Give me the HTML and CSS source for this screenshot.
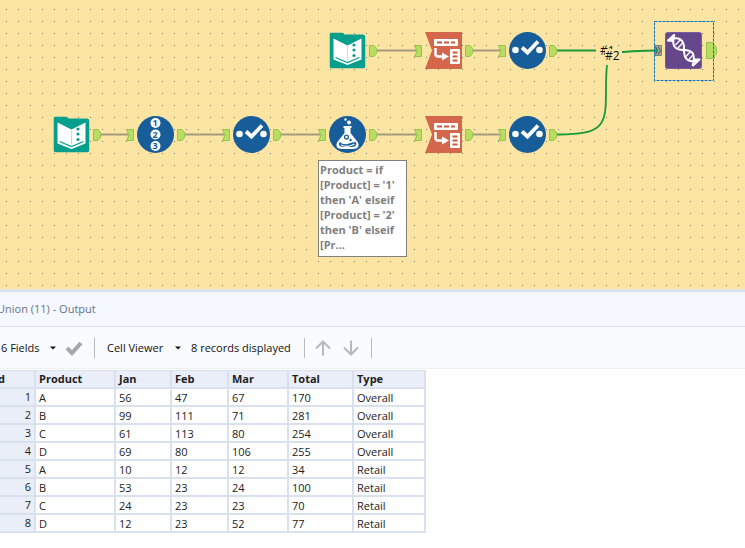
FILE: index.html
```html
<!DOCTYPE html>
<html lang="en">
<head>
<meta charset="utf-8">
<title>Workflow</title>
<link rel="stylesheet" href="styles.css">
</head>
<body>
<main class="app">
  <section class="canvas" aria-label="Workflow canvas">
    <svg class="flow" width="745" height="289" viewBox="0 0 745 289">
      <defs>
        <symbol id="out" viewBox="0 0 8 12" overflow="visible">
          <path d="M.5 .5H5L7.8 4V8L5 11.5H.5Z" fill="#b9dd62" stroke="#94c44c"/>
        </symbol>
        <symbol id="in" viewBox="0 0 8 12" overflow="visible">
          <path d="M.5 .5H7.5V11.5H.5L3 6Z" fill="#b9dd62" stroke="#94c44c"/>
        </symbol>
        <symbol id="book" viewBox="0 0 36 36">
          <path d="M2 0H12Q14 0 15 2H33Q36 2 36 5V33Q36 36 33 36H3Q0 36 0 33V2Q0 0 2 0Z" fill="#069e8c"/>
          <path d="M4 6L18 13L32 6V27L18 32.500L4 27Z" fill="#fff"/>
          <path d="M6 25L18 30L30 25" fill="none" stroke="#069e8c" stroke-width="1.300"/>
          <path d="M18 13V28" stroke="#b9e2dc"/>
          <circle cx="24.500" cy="12.500" r="1.600" fill="#069e8c"/><circle cx="24.500" cy="17.500" r="1.600" fill="#069e8c"/><circle cx="24.500" cy="23" r="1.600" fill="#069e8c"/>
        </symbol>
        <symbol id="select" viewBox="0 0 37 37">
          <circle cx="18.500" cy="18.500" r="18.500" fill="#175d99"/>
          <circle cx="6.500" cy="18" r="3.300" fill="#fff"/><circle cx="30.500" cy="18" r="3.300" fill="#fff"/>
          <path d="M13 15.500L18.500 20.500L29 9.500" fill="none" stroke="#fff" stroke-width="3.800"/>
        </symbol>
        <symbol id="transpose" viewBox="0 0 37 37">
          <path d="M0 0H37V37H0L7 18.500Z" fill="#d4674b"/>
          <rect x="9" y="7" width="24" height="7" rx="1" fill="#fff"/>
          <path d="M12 10.500H17M19 10.500H24M26 10.500H30" stroke="#cf593c" stroke-width="2"/>
          <rect x="25" y="17" width="10" height="15" rx="1" fill="#fff"/>
          <path d="M27.500 20.500H32.500M27.500 24.500H32.500M27.500 28.500H32.500" stroke="#cf593c" stroke-width="2"/>
          <path d="M10.500 16V22Q10.500 24.500 13 24.500H18" fill="none" stroke="#fff" stroke-width="2.500"/>
          <path d="M17 20.500L24 24.500L17 28.500Z" fill="#fff"/>
        </symbol>
        <symbol id="flask" viewBox="0 0 37 37">
          <circle cx="18.500" cy="18.500" r="18.500" fill="#175d99"/>
          <circle cx="16.500" cy="3.500" r="1.200" fill="#fff"/><circle cx="20" cy="6.500" r="2" fill="#fff"/>
          <path d="M14.500 10H22.500V12H21.500V17L29 26.500Q31.500 32.500 24 33H13Q5.500 32.500 8 26.500L15.500 17V12H14.500Z" fill="#fff"/>
          <path d="M10.500 26Q14.500 29 18.500 28Q23.500 26 27 26Q28.500 30.500 23 31H14Q8.500 30.500 10.500 26Z" fill="#175d99"/>
          <path d="M12 29Q18.500 32 25.500 28" fill="none" stroke="#fff" stroke-width="1.200"/>
          <circle cx="17.500" cy="21" r="1.900" fill="#fff" stroke="#175d99" stroke-width="1.300"/><circle cx="21.500" cy="24" r="1.200" fill="#175d99"/>
        </symbol>
      </defs>

      <g stroke="#a49a80" stroke-width="2">
        <path d="M376 50.500H417M472 50.500H501M100 134.500H129M184 134.500H225M280 134.500H321M376 134.500H417M472 134.500H501"/>
      </g>
      <g fill="none" stroke="#189a38" stroke-width="1.800">
        <path d="M556 50.500H596"/>
        <path d="M622 52C634 51.500 640 50.500 657 50.500" stroke-width="2"/>
        <path d="M556 134.500C604 135 606 125 606 92C606 80 606 74 607 65"/>
      </g>

      <g>
        <use href="#book" x="329.500" y="32.500" width="36" height="36"/>
        <use href="#out" x="369" y="45" width="8" height="12"/>
        <use href="#in" x="414" y="45" width="8" height="12"/>
        <use href="#transpose" x="425" y="32" width="37" height="37"/>
        <use href="#out" x="465" y="45" width="8" height="12"/>
        <use href="#in" x="498" y="45" width="8" height="12"/>
        <use href="#select" x="509" y="32" width="37" height="37"/>
        <use href="#out" x="549" y="45" width="8" height="12"/>
      </g>
      <g>
        <use href="#book" x="53.500" y="116.500" width="36" height="36"/>
        <use href="#out" x="93" y="129" width="8" height="12"/>
        <use href="#in" x="126" y="129" width="8" height="12"/>
        <circle cx="155.500" cy="134.500" r="18.500" fill="#175d99"/>
        <g fill="#fff"><circle cx="155.500" cy="123" r="5"/><circle cx="155.500" cy="134.500" r="5"/><circle cx="155.500" cy="146" r="5"/></g>
        <g class="digits"><text x="155" y="126">1</text><text x="155" y="138">2</text><text x="155" y="149">3</text></g>
        <use href="#out" x="177" y="129" width="8" height="12"/>
        <use href="#in" x="222" y="129" width="8" height="12"/>
        <use href="#select" x="233" y="116" width="37" height="37"/>
        <use href="#out" x="273" y="129" width="8" height="12"/>
        <use href="#in" x="318" y="129" width="8" height="12"/>
        <use href="#flask" x="329" y="116" width="37" height="37"/>
        <use href="#out" x="369" y="129" width="8" height="12"/>
        <use href="#in" x="414" y="129" width="8" height="12"/>
        <use href="#transpose" x="425" y="116" width="37" height="37"/>
        <use href="#out" x="465" y="129" width="8" height="12"/>
        <use href="#in" x="498" y="129" width="8" height="12"/>
        <use href="#select" x="509" y="116" width="37" height="37"/>
        <use href="#out" x="549" y="129" width="8" height="12"/>
      </g>

      <g>
        <path d="M655 45.500H661.500V55.500H655Z" fill="#a3a99a" stroke="#7d8378"/>
        <path d="M655.500 46.500L657.500 50.500L655.500 54.500M658 46.500L660.500 50.500L658 54.500" fill="none" stroke="#45504a"/>
        <path d="M654 50.500H658" stroke="#189a38" stroke-width="2"/>
        <rect x="665.500" y="32.500" width="36" height="36" rx="2" fill="#67478c" stroke="#7a5c98"/>
        <g fill="none" stroke="#fff" stroke-width="2" stroke-linejoin="round">
          <path d="M674.500 34.500C671 46 675 50 683.500 50C693 50 696 54 692.500 66"/>
          <path d="M668 40.500C679 35 684.500 40 684 49.500C683.500 60 690 64 699.500 59.500"/>
          <path d="M674.500 34.500L668 40.500L673.500 41M692.500 66L699.500 59.500L693 59.500"/>
          <path d="M675.500 45L680.500 39.500M678 48L683 42.500M685.500 57L690 52M688.500 60L693 55" stroke-width="1.300"/>
        </g>
        <path d="M706.500 42.500H712.500L716.500 47.500V53.500L712.500 58.500H706.500Z" fill="#b9dd62" stroke="#94c44c"/>
        <rect x="654.500" y="21.500" width="59" height="59" fill="none" stroke="#0b74c9" stroke-dasharray="3 1"/>
      </g>

      <g class="order">
        <text x="600" y="55">#1</text>
        <rect x="605" y="49" width="15" height="15" fill="#fce4a2"/>
        <text x="605" y="60">#2</text>
      </g>
    </svg>
    <p class="note">Product = if<br>[Product] = '1'<br>then 'A' elseif<br>[Product] = '2'<br>then 'B' elseif<br>[Pr...</p>
  </section>

  <section class="results">
    <h1 class="title">Union (11) - Output</h1>
    <div class="toolbar">
      <label class="drop fields"><select aria-label="Fields"><option>6 Fields</option></select>
        <svg width="6" height="4" viewBox="0 0 6 4"><path d="M0 .5H6L3 3.500Z" fill="#111"/></svg></label>
      <button class="icon apply" aria-label="Apply"><svg width="18" height="16" viewBox="0 0 18 16"><path d="M2 8L7 13L16 3" fill="none" stroke="#a5a7a9" stroke-width="4"/></svg></button>
      <span class="rule"></span>
      <label class="drop viewer"><select aria-label="Viewer"><option>Cell Viewer</option></select>
        <svg width="6" height="4" viewBox="0 0 6 4"><path d="M0 .5H6L3 3.500Z" fill="#111"/></svg></label>
      <span class="count">8 records displayed</span>
      <span class="rule"></span>
      <span class="arrows">
        <button class="icon" aria-label="Previous"><svg width="16" height="16" viewBox="0 0 16 16"><path d="M8 15.500V1.500M1 8.500L8 1.500L15 8.500" fill="none" stroke="#b7b9bc" stroke-width="2"/></svg></button>
        <button class="icon" aria-label="Next"><svg width="16" height="16" viewBox="0 0 16 16"><path d="M8 .5V14.500M1 7.500L8 14.500L15 7.500" fill="none" stroke="#b7b9bc" stroke-width="2"/></svg></button>
      </span>
      <span class="rule"></span>
    </div>
    <div class="grid">
      <table>
        <colgroup><col class="c-id"><col class="c-product"><col class="c-jan"><col class="c-feb"><col class="c-mar"><col class="c-total"><col class="c-type"></colgroup>
        <thead><tr><th>d</th><th>Product</th><th>Jan</th><th>Feb</th><th>Mar</th><th>Total</th><th>Type</th></tr></thead>
        <tbody>
          <tr><th>1</th><td>A</td><td>56</td><td>47</td><td>67</td><td>170</td><td>Overall</td></tr>
          <tr><th>2</th><td>B</td><td>99</td><td>111</td><td>71</td><td>281</td><td>Overall</td></tr>
          <tr><th>3</th><td>C</td><td>61</td><td>113</td><td>80</td><td>254</td><td>Overall</td></tr>
          <tr><th>4</th><td>D</td><td>69</td><td>80</td><td>106</td><td>255</td><td>Overall</td></tr>
          <tr><th>5</th><td>A</td><td>10</td><td>12</td><td>12</td><td>34</td><td>Retail</td></tr>
          <tr><th>6</th><td>B</td><td>53</td><td>23</td><td>24</td><td>100</td><td>Retail</td></tr>
          <tr><th>7</th><td>C</td><td>24</td><td>23</td><td>23</td><td>70</td><td>Retail</td></tr>
          <tr><th>8</th><td>D</td><td>12</td><td>23</td><td>52</td><td>77</td><td>Retail</td></tr>
        </tbody>
      </table>
    </div>
  </section>
</main>
</body>
</html>
```

FILE: styles.css
```css
* { box-sizing: border-box; }
body {
  margin: 0;
  background: #fff;
  color: #111;
  font: 11px/16px "Open Sans", "Noto Sans", sans-serif;
}
.app { overflow: hidden; }

.canvas {
  position: relative;
  background: #fce4a2 conic-gradient(from 90deg at 11px 11px, #80786a 90deg, transparent 0) 7px 10px / 12px 12px;
}
.flow { display: block; }
.note {
  position: absolute;
  left: 318px;
  top: 160px;
  width: 89px;
  margin: 0;
  padding: 1px 1px 4px;
  border: 1px solid #808080;
  background: #fff;
  color: #808080;
  font-weight: 700;
  line-height: 15px;
  white-space: nowrap;
}
.digits { font: 700 9px "Open Sans", sans-serif; text-anchor: middle; fill: #175d99; }
.order { font: 12px "Open Sans", sans-serif; fill: #111; }

.title {
  margin: 0;
  padding: 9px 0;
  border-top: 3px solid #dde3ee;
  border-bottom: 1px solid #d9e1ee;
  background: #f5f8fe;
  color: #65748d;
  font-size: 11px;
  font-weight: 400;
  line-height: 16px;
  text-indent: -3px;
}
.toolbar {
  display: flex;
  align-items: center;
  height: 42px;
  border-bottom: 1px solid #eef0f4;
  background: #fafbfd;
}
.drop { display: flex; align-items: center; justify-content: space-between; }
.drop select {
  appearance: none;
  margin: 0;
  padding: 0;
  border: 0;
  background: none;
  color: inherit;
  font: inherit;
}
.fields { width: 56px; padding-left: 1px; }
.viewer { width: 74px; margin: 0 10px 0 12px; }
.icon { display: flex; padding: 0; border: 0; background: none; }
.apply { margin: 0 11px 0 9px; }
.rule { width: 1px; height: 20px; background: #b9bbbf; }
.count { width: 113px; white-space: nowrap; }
.arrows { display: flex; gap: 12px; margin: 0 12px 0 10px; }

.grid { padding-top: 1px; }
table {
  width: 426px;
  border-top: 1px solid #d9e1ef;
  border-collapse: separate;
  border-spacing: 0;
  table-layout: fixed;
  color: #222;
}
.c-id { width: 36px; }
.c-product { width: 80px; }
.c-jan { width: 56px; }
.c-feb { width: 57px; }
.c-mar { width: 60px; }
.c-total { width: 65px; }
.c-type { width: 72px; }
th, td {
  height: 18px;
  padding: 0 3px;
  border: solid #d9e1ef;
  border-width: 0 2px 2px 0;
  line-height: 16px;
  text-align: left;
}
td { padding-top: 2px; line-height: 14px; }
th { background: #eaeef9; }
thead th:first-child { padding-left: 0; text-indent: -2px; }
tbody th { font-weight: 400; text-align: right; }
```
